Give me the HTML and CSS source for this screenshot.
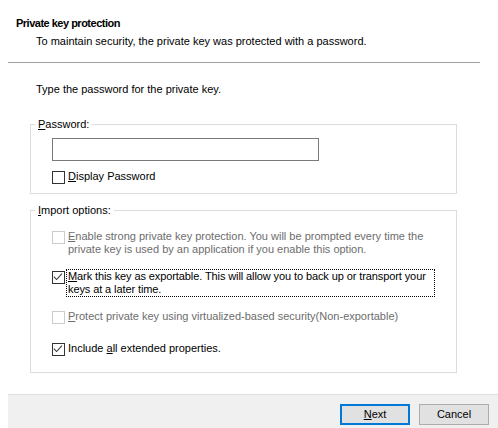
FILE: index.html
```html
<!DOCTYPE html>
<html lang="en">
<head>
<meta charset="utf-8">
<title>Private key protection</title>
<link rel="stylesheet" href="styles.css">
</head>
<body>
<div class="dialog">
  <header class="head">
    <div class="title">Private key protection</div>
    <div class="subtitle">To maintain security, the private key was protected with a password.</div>
  </header>
  <div class="sep"></div>
  <main class="content">
    <p class="intro">Type the password for the private key.</p>
    <fieldset class="group group-pass">
      <legend><u>P</u>assword:</legend>
      <div class="group-body">
        <div class="pw"></div>
        <div class="check row-display">
          <span class="box"></span>
          <span class="lbl"><u>D</u>isplay Password</span>
        </div>
      </div>
    </fieldset>
    <fieldset class="group group-import">
      <legend><u>I</u>mport options:</legend>
      <div class="group-body options">
        <div class="check disabled">
          <span class="box"></span>
          <span class="lbl"><u>E</u>nable strong private key protection. You will be prompted every time the<br>private key is used by an application if you enable this option.</span>
        </div>
        <div class="check">
          <span class="box checked"><svg viewBox="0 0 13 13" width="11" height="11"><polyline points="1,5.5 4.3,9 10.5,2" fill="none" stroke="#333" stroke-width="1.2"/></svg></span>
          <span class="lbl focus"><u>M</u>ark this key as exportable. This will allow you to back up or transport your<br>keys at a later time.</span>
        </div>
        <div class="check disabled">
          <span class="box"></span>
          <span class="lbl"><u>P</u>rotect private key using virtualized-based security(Non-exportable)</span>
        </div>
        <div class="check last">
          <span class="box checked"><svg viewBox="0 0 13 13" width="11" height="11"><polyline points="1,5.5 4.3,9 10.5,2" fill="none" stroke="#333" stroke-width="1.2"/></svg></span>
          <span class="lbl">Include <u>a</u>ll extended properties.</span>
        </div>
      </div>
    </fieldset>
  </main>
  <footer class="bar">
    <button class="btn btn-default"><u>N</u>ext</button>
    <button class="btn">Cancel</button>
  </footer>
</div>
</body>
</html>
```

FILE: styles.css
```css
html, body {
  margin: 0;
  padding: 0;
  background: #ffffff;
}
body {
  width: 498px;
  height: 428px;
  overflow: hidden;
  font-family: "Liberation Sans", Arial, sans-serif;
  font-size: 11px;
  line-height: 13px;
  color: #000000;
}
.dialog {
  display: flex;
  flex-direction: column;
  height: 428px;
}
.head {
  padding: 17px 0 14px 0;
}
.title {
  padding-left: 16px;
  font-weight: bold;
  letter-spacing: -0.5px;
}
.subtitle {
  margin-top: 5px;
  padding-left: 36px;
}
.sep {
  margin-left: 8px;
  width: 472px;
  border-top: 1px solid #a0a0a0;
}
.intro {
  margin: 20px 0 0 36px;
}
.group {
  margin: 0 0 0 30px;
  width: 427px;
  box-sizing: border-box;
  border: 1px solid #dcdcdc;
  padding: 8px 0 9px 0;
  min-width: 0;
}
.group legend {
  margin-left: 4px;
  padding: 0 3px;
  line-height: 12px;
}
.group-pass {
  margin-top: 22px;
}
.group-import {
  margin-top: 10px;
  padding-top: 14px;
  padding-bottom: 16px;
}
.group-body {
  padding-left: 21px;
}
.pw {
  width: 267px;
  height: 23px;
  box-sizing: border-box;
  border: 1px solid #7a7a7a;
  background: #fff;
}
.check {
  display: flex;
  align-items: flex-start;
}
.row-display {
  margin-top: 9px;
}
.options {
  display: flex;
  flex-direction: column;
  gap: 14px;
}
.options .last {
  margin-top: 4px;
}
.box {
  flex: none;
  width: 13px;
  height: 13px;
  box-sizing: border-box;
  margin-top: 1px;
  border: 1px solid #333333;
  background: #fff;
  display: flex;
  align-items: center;
  justify-content: center;
}
.box svg {
  display: block;
}
.lbl {
  margin-left: 2px;
  padding: 0 1px;
  white-space: nowrap;
}
.focus {
  width: 367px;
  box-sizing: border-box;
  outline: 1px dotted #000;
  outline-offset: 0;
  letter-spacing: -0.1px;
}
.disabled .lbl {
  color: #6d6d6d;
}
.disabled .box {
  border-color: #cccccc;
}
.bar {
  margin-top: auto;
  margin-left: 8px;
  height: 34px;
  box-sizing: border-box;
  border-top: 1px solid #dfdfdf;
  background: #f0f0f0;
  padding: 9px 9px 0 0;
  display: flex;
  justify-content: flex-end;
  align-items: flex-start;
  gap: 9px;
}
.btn {
  width: 70px;
  height: 21px;
  box-sizing: border-box;
  border: 1px solid #adadad;
  background: #e1e1e1;
  font-family: "Liberation Sans", Arial, sans-serif;
  font-size: 11px;
  line-height: 13px;
  color: #000;
  padding: 0;
  margin: 0;
}
.btn-default {
  border: 2px solid #0078d7;
}
```
